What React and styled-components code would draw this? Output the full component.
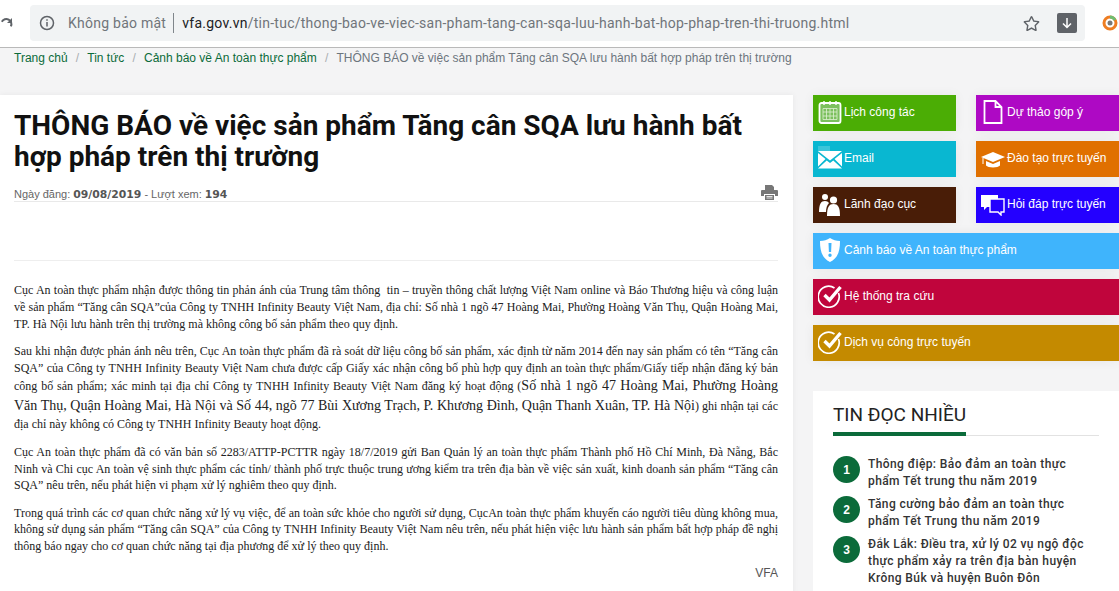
import React from "react";
import styled, { createGlobalStyle } from "styled-components";
import { FaRegStar } from "react-icons/fa";

const Global = createGlobalStyle`
  html, body {
    margin: 0;
    padding: 0;
    height: 591px;
    overflow: hidden;
    background: #f4f4f5;
    font-family: "Liberation Sans", Arial, sans-serif;
  }
  * { box-sizing: border-box; }
`;

const Page = styled.div`
  width: 1119px;
  height: 591px;
  overflow: hidden;
`;

/* browser chrome */
const Chrome = styled.div`
  height: 48px;
  background: #fff;
  border-bottom: 1px solid #b9b9b9;
  padding: 5px 0 6px 30px;
  display: flex;
  align-items: flex-start;
  position: relative;
`;

const Reload = styled.svg`
  position: absolute;
  left: 0;
  top: 17px;
`;

const Omnibox = styled.div`
  width: 1055px;
  height: 36px;
  background: #f1f3f4;
  border-radius: 4px;
  display: flex;
  align-items: center;
  padding-left: 9px;
  font-family: "Roboto", sans-serif;
  font-size: 14px;
  letter-spacing: 0.25px;
  color: #70757a;
`;

const Secure = styled.span`
  margin-left: 13px;
  padding-right: 7px;
  border-right: 1px solid #80868b;
  line-height: 20px;
  margin-right: 8px;
`;

const Host = styled.span`
  color: #202124;
`;

const Url = styled.div`
  flex: 1;
  white-space: nowrap;
`;

const DownloadBtn = styled.div`
  width: 20px;
  height: 20px;
  background: #5f6368;
  border-radius: 2px;
  margin: 0 8px 0 17px;
  display: flex;
  align-items: center;
  justify-content: center;
`;

const ExtIcon = styled.svg`
  position: absolute;
  left: 1102px;
  top: 15px;
`;

/* breadcrumb */
const Crumbs = styled.div`
  height: 47px;
  padding: 2px 0 0 14px;
  font-size: 12px;
  line-height: 17px;
  color: #6c757d;
  white-space: nowrap;
`;

const Crumb = styled.a`
  color: #0b6b3a;
`;

const Sep = styled.span`
  color: #a9adb1;
  margin: 0 8.2px;
`;

const Layout = styled.div`
  display: grid;
  grid-template-columns: 793px 306px;
  column-gap: 20px;
  align-items: start;
`;

/* article */
const Article = styled.article`
  background: #fff;
  padding: 15px 15px 0 14px;
  height: 500px;
  box-shadow: 0 0 6px rgba(0, 0, 0, 0.06);
`;

const Title = styled.h1`
  margin: 0;
  font-family: "Roboto", sans-serif;
  font-size: 28px;
  font-weight: 700;
  line-height: 31px;
  color: #111;
`;

const Meta = styled.div`
  margin-top: 15px;
  height: 15px;
  border-bottom: 1px solid #e9e9e9;
  font-size: 11px;
  line-height: 15px;
  color: #666;
  display: flex;
  justify-content: space-between;
  align-items: flex-start;
`;

const MetaValue = styled.b`
  font-family: "DejaVu Sans", sans-serif;
  font-size: 10.8px;
  color: #555;
`;

const PrintIcon = styled.svg`
  margin-top: -2px;
`;

const Spacer = styled.div`
  height: 59px;
  border-bottom: 1px solid #eeeeee;
`;

const Body = styled.div`
  margin-top: 21px;
  font-family: "Liberation Serif", serif;
  font-size: 12px;
  line-height: 16.8px;
  color: #222;
  text-align: justify;
`;

const P = styled.p`
  margin: 0 0 10.5px;
`;

const Big = styled.span`
  font-size: 14px;
  line-height: 20px;
`;

const Source = styled.div`
  text-align: right;
  font-size: 12px;
  color: #555;
  margin-top: 1px;
`;

/* sidebar */
const Side = styled.aside`
  display: flex;
  flex-direction: column;
`;

const TileGrid = styled.div`
  display: grid;
  grid-template-columns: 143px 143px;
  column-gap: 20px;
  row-gap: 10px;
`;

const Wide = styled.div`
  display: flex;
  flex-direction: column;
  gap: 10px;
  margin-top: 10px;
`;

const Tile = styled.a`
  height: 36px;
  background: ${(p) => p.$bg};
  color: #fff;
  font-size: 12px;
  display: flex;
  align-items: center;
  padding: 0 0 3px 5px;
  white-space: nowrap;
  overflow: hidden;
  box-shadow: 0 0 12px rgba(0, 0, 0, 0.06);
`;

const TileIcon = styled.svg`
  width: 24px;
  height: 24px;
  flex: none;
  margin-right: 2px;
`;

const Card = styled.section`
  margin-top: 30px;
  background: #fff;
  padding: 10px 20px 0;
  height: 220px;
`;

const CardHead = styled.div`
  border-bottom: 1px solid #e2e2e2;
  height: 35px;
`;

const CardTitle = styled.h2`
  display: inline-block;
  margin: 0;
  height: 35px;
  border-bottom: 4px solid #0b6b3a;
  font-family: "Roboto", sans-serif;
  font-size: 19px;
  font-weight: 400;
  line-height: 28px;
  color: #222;
`;

const List = styled.ol`
  list-style: none;
  margin: 20px 0 0;
  padding: 0;
  display: flex;
  flex-direction: column;
  gap: 6px;
`;

const Item = styled.li`
  display: flex;
  gap: 8px;
`;

const Num = styled.span`
  width: 27px;
  height: 27px;
  flex: none;
  border-radius: 50%;
  background: #0b6b3a;
  color: #fff;
  font-size: 12px;
  font-weight: 700;
  display: flex;
  align-items: center;
  justify-content: center;
`;

const ItemText = styled.a`
  font-family: "Roboto", sans-serif;
  font-size: 12px;
  font-weight: 500;
  line-height: 17px;
  letter-spacing: 0.4px;
  color: #333;
`;

const CalendarIcon = () => (
  <TileIcon viewBox="0 0 24 24" fill="none" stroke="#fff">
    <rect x="1.5" y="3" width="21" height="20" rx="2" strokeWidth="1.8" fill="#7cc05e" />
    <path d="M6 1v4M12 1v4M18 1v4" strokeWidth="1.4" />
    <path d="M5 8.500h14v11H5zM5 12h14M5 16h14M8.500 8.500v11M12 8.500v11M15.500 8.500v11" strokeWidth="0.8" stroke="#dff0d4" />
  </TileIcon>
);

const DocIcon = () => (
  <TileIcon viewBox="0 0 24 24" fill="none" stroke="#fff" strokeWidth="1.8">
    <path d="M3.500 1h11l6 6v16h-17zM14.500 1v6h6" />
  </TileIcon>
);

const MailIcon = () => (
  <TileIcon viewBox="0 0 24 24">
    <rect x="0" y="0" width="12" height="6" fill="#fff" opacity="0.2" />
    <path d="M0 5h24L12 14.500z" fill="#fff" />
    <path d="M0 7l7.500 6L0 20.500zM24 7l-7.500 6L24 20.500zM0 22.500l8.700-8 3.300 2.600 3.300-2.600 8.700 8z" fill="#fff" />
  </TileIcon>
);

const CapIcon = () => (
  <TileIcon viewBox="0 0 24 24" fill="#fff">
    <path d="M0 11l12-5 12 5-12 5z" />
    <path d="M5 15l7 3 7-3v4.500c-2 2.500-12 2.500-14 0z" />
    <path d="M2 12v6" stroke="#fff" strokeWidth="1" />
  </TileIcon>
);

const PeopleIcon = () => (
  <TileIcon viewBox="0 0 24 24" fill="#fff">
    <circle cx="7" cy="5" r="3" />
    <path d="M1 20c0-8 2-11 6-11 2 0 3 .7 4 2-2 2-3 5-3 9z" />
    <circle cx="15.500" cy="8" r="3.600" />
    <path d="M9 24c0-9 2-12 6.500-12S22 15 22 24z" />
  </TileIcon>
);

const ChatIcon = () => (
  <TileIcon viewBox="0 0 24 24">
    <path d="M0 3h17v12H6l-3 3v-3H0z" fill="#fff" />
    <path d="M9 7h14v13h-3v3l-3-3H9z" fill="#2400ff" stroke="#fff" strokeWidth="1.400" />
  </TileIcon>
);

const ShieldIcon = () => (
  <TileIcon viewBox="0 0 24 24">
    <path fillRule="evenodd" d="M12 0c3 2 6 3 10 3 0 10-2 17-10 21C4 20 2 13 2 3c4 0 7-1 10-3zM10.500 5l.4 9h2.200l.4-9zM12 15.500a1.700 1.700 0 100 3.400 1.700 1.700 0 000-3.400z" fill="#fff" />
  </TileIcon>
);

const CheckIcon = () => (
  <TileIcon viewBox="0 0 24 24" fill="none" stroke="#fff">
    <path d="M20.500 9a10.500 10.500 0 11-4-5" strokeWidth="1.700" />
    <path d="M6.500 11l5 5 11-13" strokeWidth="3.400" />
  </TileIcon>
);

const tiles = [
  { bg: "#4bad05", icon: <CalendarIcon />, label: "Lịch công tác" },
  { bg: "#ae09c4", icon: <DocIcon />, label: "Dự thảo góp ý" },
  { bg: "#09b7d1", icon: <MailIcon />, label: "Email" },
  { bg: "#e07000", icon: <CapIcon />, label: "Đào tạo trực tuyến" },
  { bg: "#491d07", icon: <PeopleIcon />, label: "Lãnh đạo cục" },
  { bg: "#2400ff", icon: <ChatIcon />, label: "Hỏi đáp trực tuyến" },
];

const wideTiles = [
  { bg: "#3fb4fc", icon: <ShieldIcon />, label: "Cảnh báo về An toàn thực phẩm" },
  { bg: "#c0053c", icon: <CheckIcon />, label: "Hệ thống tra cứu" },
  { bg: "#c48a00", icon: <CheckIcon />, label: "Dịch vụ công trực tuyến" },
];

const news = [
  "Thông điệp: Bảo đảm an toàn thực phẩm Tết trung thu năm 2019",
  "Tăng cường bảo đảm an toàn thực phẩm Tết Trung thu năm 2019",
  "Đắk Lắk: Điều tra, xử lý 02 vụ ngộ độc thực phẩm xảy ra trên địa bàn huyện Krông Búk và huyện Buôn Đôn",
];

export default function App() {
  return (
    <Page>
      <Global />
      <Chrome>
        <Reload width="13" height="14" viewBox="0 0 13 14" fill="none" stroke="#5f6368" strokeWidth="2">
          <path d="M10.500 4A5 5 0 102 9.500" transform="rotate(60 6 7)" />
          <path d="M12 1v5H7z" fill="#5f6368" stroke="none" />
        </Reload>
        <Omnibox>
          <svg width="16" height="16" viewBox="0 0 16 16" fill="none" stroke="#5f6368" strokeWidth="1.500">
            <circle cx="8" cy="8" r="6.500" />
            <path d="M8 7v4.500M8 4.200v1.500" />
          </svg>
          <Secure>Không bảo mật</Secure>
          <Url>
            <Host>vfa.gov.vn</Host>/tin-tuc/thong-bao-ve-viec-san-pham-tang-can-sqa-luu-hanh-bat-hop-phap-tren-thi-truong.html
          </Url>
          <FaRegStar size={17} color="#5f6368" />
          <DownloadBtn>
            <svg width="12" height="12" viewBox="0 0 12 12" fill="none" stroke="#fff" strokeWidth="1.500">
              <path d="M6 1v9M2 6.500l4 4 4-4" />
            </svg>
          </DownloadBtn>
        </Omnibox>
        <ExtIcon width="17" height="17" viewBox="0 0 17 17" fill="none">
          <circle cx="8" cy="8" r="6" stroke="#ee7d22" strokeWidth="3" />
          <path d="M8 2a6 6 0 015 3" stroke="#6dbd72" strokeWidth="3" />
          <circle cx="8" cy="8" r="2.500" fill="#777" />
        </ExtIcon>
      </Chrome>

      <Crumbs>
        <Crumb>Trang chủ</Crumb>
        <Sep>/</Sep>
        <Crumb>Tin tức</Crumb>
        <Sep>/</Sep>
        <Crumb>Cảnh báo về An toàn thực phẩm</Crumb>
        <Sep>/</Sep>
        THÔNG BÁO về việc sản phẩm Tăng cân SQA lưu hành bất hợp pháp trên thị trường
      </Crumbs>

      <Layout>
        <Article>
          <Title>THÔNG BÁO về việc sản phẩm Tăng cân SQA lưu hành bất hợp pháp trên thị trường</Title>
          <Meta>
            <span>
              Ngày đăng: <MetaValue>09/08/2019</MetaValue> - Lượt xem: <MetaValue>194</MetaValue>
            </span>
            <PrintIcon width="17" height="15" viewBox="0 0 17 15" fill="#777">
              <path d="M4 0h7l2 2v3H4zM1 5h15a1 1 0 011 1v5h-3V9H3v2H0V6a1 1 0 011-1zM4 10h9v5H4z" />
              <path d="M5.500 11.500h6M5.500 13h6" stroke="#fff" strokeWidth="0.800" />
            </PrintIcon>
          </Meta>
          <Spacer />
          <Body>
            <P>
              Cục An toàn thực phẩm nhận được thông tin phản ánh của Trung tâm thông&nbsp; tin – truyền thông chất lượng Việt Nam online và Báo Thương hiệu và công luận về sản phẩm “Tăng cân SQA”của Công ty TNHH Infinity Beauty Việt Nam, địa chỉ: Số nhà 1 ngõ 47 Hoàng Mai, Phường Hoàng Văn Thụ, Quận Hoàng Mai, TP. Hà Nội lưu hành trên thị trường mà không công bố sản phẩm theo quy định.
            </P>
            <P>
              Sau khi nhận được phản ánh nêu trên, Cục An toàn thực phẩm đã rà soát dữ liệu công bố sản phẩm, xác định từ năm 2014 đến nay sản phẩm có tên “Tăng cân SQA” của Công ty TNHH Infinity Beauty Việt Nam chưa được cấp Giấy xác nhận công bố phù hợp quy định an toàn thực phẩm/Giấy tiếp nhận đăng ký bản công bố sản phẩm; xác minh tại địa chỉ Công ty TNHH Infinity Beauty Việt Nam đăng ký hoạt động (<Big>Số nhà 1 ngõ 47 Hoàng Mai, Phường Hoàng Văn Thụ, Quận Hoàng Mai, Hà Nội và Số 44, ngõ 77 Bùi Xương Trạch, P. Khương Đình, Quận Thanh Xuân, TP. Hà Nội</Big>) ghi nhận tại các địa chỉ này không có Công ty TNHH Infinity Beauty hoạt động.
            </P>
            <P>
              Cục An toàn thực phẩm đã có văn bản số 2283/ATTP-PCTTR ngày 18/7/2019 gửi Ban Quản lý an toàn thực phẩm Thành phố Hồ Chí Minh, Đà Nẵng, Bắc Ninh và Chi cục An toàn vệ sinh thực phẩm các tỉnh/ thành phố trực thuộc trung ương kiểm tra trên địa bàn về việc sản xuất, kinh doanh sản phẩm “Tăng cân SQA” nêu trên, nếu phát hiện vi phạm xử lý nghiêm theo quy định.
            </P>
            <P>
              Trong quá trình các cơ quan chức năng xử lý vụ việc, để an toàn sức khỏe cho người sử dụng, CụcAn toàn thực phẩm khuyến cáo người tiêu dùng không mua, không sử dụng sản phẩm “Tăng cân SQA” của Công ty TNHH Infinity Beauty Việt Nam nêu trên, nếu phát hiện việc lưu hành sản phẩm bất hợp pháp đề nghị thông báo ngay cho cơ quan chức năng tại địa phương để xử lý theo quy định.
            </P>
          </Body>
          <Source>VFA</Source>
        </Article>

        <Side>
          <TileGrid>
            {tiles.map((t) => (
              <Tile key={t.label} $bg={t.bg}>
                {t.icon}
                {t.label}
              </Tile>
            ))}
          </TileGrid>
          <Wide>
            {wideTiles.map((t) => (
              <Tile key={t.label} $bg={t.bg}>
                {t.icon}
                {t.label}
              </Tile>
            ))}
          </Wide>
          <Card>
            <CardHead>
              <CardTitle>TIN ĐỌC NHIỀU</CardTitle>
            </CardHead>
            <List>
              {news.map((text, i) => (
                <Item key={text}>
                  <Num>{i + 1}</Num>
                  <ItemText>{text}</ItemText>
                </Item>
              ))}
            </List>
          </Card>
        </Side>
      </Layout>
    </Page>
  );
}
